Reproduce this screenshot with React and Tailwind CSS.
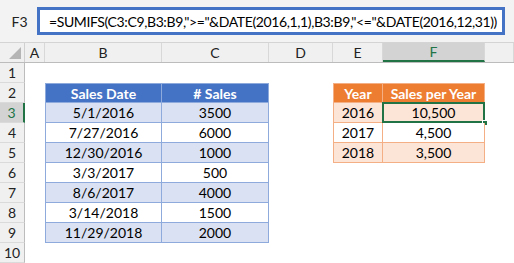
import React from "react";

const font = { fontFamily: "Lato, 'Liberation Sans', sans-serif" };

const colWidths = ["w-[20px]", "w-[117px]", "w-[107px]", "w-[64px]", "w-[50px]", "w-[102px]", "flex-1"];
const colNames = ["A", "B", "C", "D", "E", "F", ""];

const sales = [
  ["5/1/2016", "3500"],
  ["7/27/2016", "6000"],
  ["12/30/2016", "1000"],
  ["3/3/2017", "500"],
  ["8/6/2017", "4000"],
  ["3/14/2018", "1500"],
  ["11/29/2018", "2000"],
];

const perYear = [
  ["2016", "10,500"],
  ["2017", "4,500"],
  ["2018", "3,500"],
];

const RowHeader = ({ n }) => (
  <div
    className={`w-[25px] h-full flex items-center justify-center text-[14px] border-b border-[#dadada] ${
      n === 3 ? "bg-[#d3d3d3] border-r-2 border-r-[#217346] text-[#217346]" : "bg-[#f0f0f0] border-r border-r-[#bcbcbc] text-[#222]"
    }`}
  >
    {n}
  </div>
);

const Cell = ({ w, className = "", children }) => (
  <div className={`${w} h-full flex items-center justify-center text-[14px] ${className}`}>{children}</div>
);

const SheetRow = ({ n }) => {
  let b = null, c = null, e = null, f = null;
  if (n === 2) {
    b = <Cell w={colWidths[1]} className="bg-[#4472c4] text-white font-bold border border-[#8ea9db]">Sales Date</Cell>;
    c = <Cell w={colWidths[2]} className="bg-[#4472c4] text-white font-bold border-t border-r border-b border-[#8ea9db]"># Sales</Cell>;
    e = <Cell w={colWidths[4]} className="bg-[#ed7d31] text-white font-bold border border-[#f4b084]">Year</Cell>;
    f = <Cell w={colWidths[5]} className="bg-[#ed7d31] text-white font-bold border-t border-r border-b border-[#f4b084]">Sales per Year</Cell>;
  } else if (n >= 3 && n <= 9) {
    const [d, s] = sales[n - 3];
    const bg = n % 2 === 1 ? "bg-[#d9e1f2]" : "bg-white";
    b = <Cell w={colWidths[1]} className={`${bg} text-black border-l border-r border-b border-[#8ea9db]`}>{d}</Cell>;
    c = <Cell w={colWidths[2]} className={`${bg} text-black border-r border-b border-[#8ea9db]`}>{s}</Cell>;
    if (n <= 5) {
      const [y, v] = perYear[n - 3];
      const obg = n === 4 ? "bg-white" : "bg-[#fce4d6]";
      e = <Cell w={colWidths[4]} className={`${obg} text-black border-l border-r border-b border-[#f4b084]`}>{y}</Cell>;
      f = (
        <div className={`${colWidths[5]} h-full relative flex items-center justify-center text-[14px] text-black ${obg} border-r border-b border-[#f4b084]`}>
          {v}
          {n === 3 && (
            <>
              <div className="absolute -left-px -top-px -right-px -bottom-px border-2 border-[#217346]" />
              <div className="absolute -right-[4px] -bottom-[4px] w-[6px] h-[6px] bg-[#217346] border border-white" />
            </>
          )}
        </div>
      );
    }
  }
  return (
    <div className="flex h-[20px]">
      <RowHeader n={n} />
      <div className={colWidths[0]} />
      {b || <div className={colWidths[1]} />}
      {c || <div className={colWidths[2]} />}
      <div className={colWidths[3]} />
      {e || <div className={colWidths[4]} />}
      {f || <div className={colWidths[5]} />}
      <div className="flex-1" />
    </div>
  );
};

export default function App() {
  return (
    <div className="w-[514px] h-[263px] overflow-hidden bg-white" style={font}>
      {/* Formula bar */}
      <div className="h-[43px] bg-[#f3f3f3] flex items-start pt-[7px] border-b border-[#d4d4d4]">
        <div className="w-[37px] h-[28px] flex items-center justify-center pl-[2px] text-[14px] text-[#222]">F3</div>
        <div className="w-[468px] h-[28px] bg-white border-[3px] border-[#4472c4] flex items-center pl-[9px] text-[14px] tracking-[-0.38px] text-black whitespace-nowrap overflow-hidden">
          =SUMIFS(C3:C9,B3:B9,"&gt;="&amp;DATE(2016,1,1),B3:B9,"&lt;="&amp;DATE(2016,12,31))
        </div>
      </div>
      {/* Column headers */}
      <div className="flex h-[20px] bg-[#f0f0f0] border-b border-[#bcbcbc]">
        <div className="w-[25px] h-full relative border-r border-[#d0d0d0]">
          <svg className="absolute right-[3px] bottom-[3px]" width="12" height="12" viewBox="0 0 12 12">
            <polygon points="12,0 12,12 0,12" fill="#b5b5b5" />
          </svg>
        </div>
        {colNames.map((c, i) => (
          <div
            key={i}
            className={`${colWidths[i]} h-full flex items-center justify-center text-[14px] border-r border-[#d8d8d8] ${
              c === "F" ? "bg-[#d3d3d3] border-b-2 border-b-[#217346] text-[#217346]" : "text-[#222]"
            }`}
          >
            {c}
          </div>
        ))}
      </div>
      {[1, 2, 3, 4, 5, 6, 7, 8, 9, 10].map((n) => (
        <SheetRow key={n} n={n} />
      ))}
    </div>
  );
}
